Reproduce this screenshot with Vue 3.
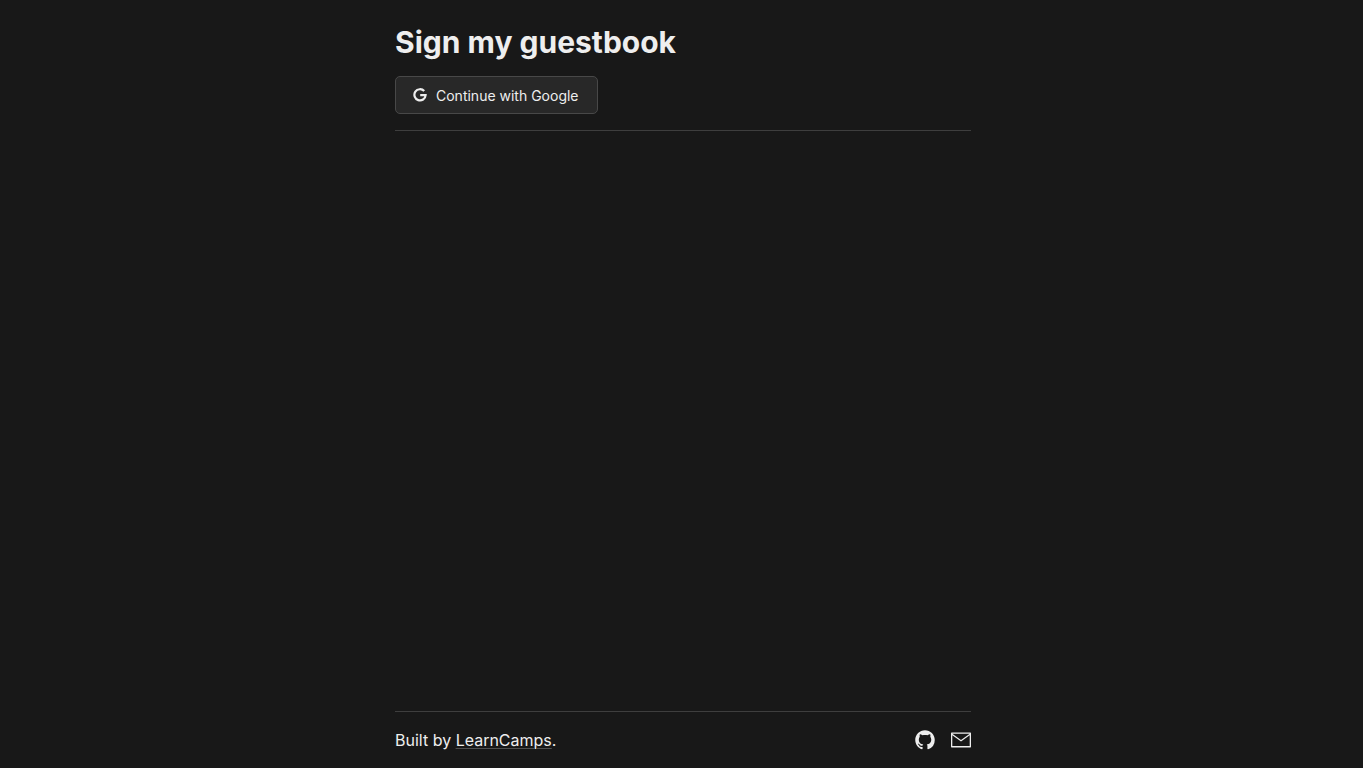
<template>
  <div class="page">
    <main class="content">
      <h1 class="title">Sign my guestbook</h1>
      <button type="button" class="sign-in">
        <svg class="google-icon" viewBox="0 0 16 16" aria-hidden="true">
          <path
            d="M11.2 3.1A5.6 5.6 0 1 0 12.6 7.2H7.2"
            fill="none"
            stroke="currentColor"
            stroke-width="2.2"
          />
        </svg>
        <span>Continue with Google</span>
      </button>
    </main>
    <footer class="footer">
      <p class="credit">Built by <a class="credit-link" href="#">LearnCamps</a>.</p>
      <nav class="social">
        <a
          v-for="link in links"
          :key="link.label"
          class="social-link"
          :href="link.href"
          :aria-label="link.label"
        >
          <svg class="social-icon" :viewBox="link.viewBox" aria-hidden="true">
            <path :d="link.path" fill="currentColor" fill-rule="evenodd" />
          </svg>
        </a>
      </nav>
    </footer>
  </div>
</template>

<script setup>
const links = [
  {
    label: 'GitHub',
    href: '#github',
    viewBox: '-.2 -.2 16.4 16.4',
    path: 'M8 0C3.58 0 0 3.58 0 8c0 3.54 2.29 6.53 5.47 7.59.4.07.55-.17.55-.38 0-.19-.01-.82-.01-1.49-2.01.37-2.53-.49-2.69-.94-.09-.23-.48-.94-.82-1.13-.28-.15-.68-.52-.01-.53.63-.01 1.08.58 1.23.82.72 1.21 1.87.87 2.33.66.07-.52.28-.87.51-1.07-1.78-.2-3.64-.89-3.64-3.95 0-.87.31-1.59.82-2.15-.08-.2-.36-1.02.08-2.12 0 0 .67-.21 2.2.82.64-.18 1.32-.27 2-.27s1.36.09 2 .27c1.53-1.04 2.2-.82 2.2-.82.44 1.1.16 1.92.08 2.12.51.56.82 1.27.82 2.15 0 3.07-1.87 3.75-3.65 3.95.29.25.54.73.54 1.48 0 1.07-.01 1.93-.01 2.2 0 .21.15.46.55.38A8.01 8.01 0 0 0 16 8c0-4.42-3.58-8-8-8z',
  },
  {
    label: 'Email',
    href: '#email',
    viewBox: '0 0 20 20',
    path: 'M.6 2.6h18.8a.6.6 0 0 1 .6.6v13.6a.6.6 0 0 1-.6.6H.6a.6.6 0 0 1-.6-.6V3.2a.6.6 0 0 1 .6-.6zM1.3 5.3v10.8h17.4V5.3L10 11.5zM1.3 3.8 10 10l8.7-6.2z',
  },
]
</script>

<style>
body {
  margin: 0;
  background: #181818;
}
</style>

<style scoped>
.page {
  box-sizing: border-box;
  display: flex;
  flex-direction: column;
  align-items: center;
  min-height: 100vh;
  padding: 0 21px 0 24px;
  background: #181818;
  color: #eeeeee;
  font-family: Inter, sans-serif;
  font-size: 16px;
  line-height: 24px;
}
.content,
.footer {
  box-sizing: border-box;
  width: 100%;
  max-width: 576px;
}
.content {
  padding: 24px 0 16px;
  border-bottom: 1px solid #3e3e3e;
}
.title {
  margin: 0 0 16px;
  font-size: 30px;
  line-height: 36px;
  font-weight: 700;
}
.sign-in {
  display: flex;
  align-items: center;
  gap: 7px;
  padding: 9px 18px 7px 17px;
  border: 1px solid #484848;
  border-radius: 5px;
  background: #282828;
  color: inherit;
  font-family: inherit;
  font-size: 14px;
  line-height: 20px;
  cursor: pointer;
}
.google-icon {
  width: 16px;
  height: 16px;
}
.footer {
  display: flex;
  align-items: center;
  justify-content: space-between;
  margin-top: auto;
  padding: 16px 0;
  border-top: 1px solid #3e3e3e;
}
.credit {
  margin: 0;
}
.credit-link {
  color: inherit;
  text-decoration: underline;
  text-decoration-color: #505050;
  text-decoration-thickness: 1px;
  text-underline-offset: 2px;
}
.social {
  display: flex;
  gap: 16px;
}
.social-link {
  display: flex;
  color: inherit;
}
.social-icon {
  width: 20px;
  height: 20px;
}
</style>
